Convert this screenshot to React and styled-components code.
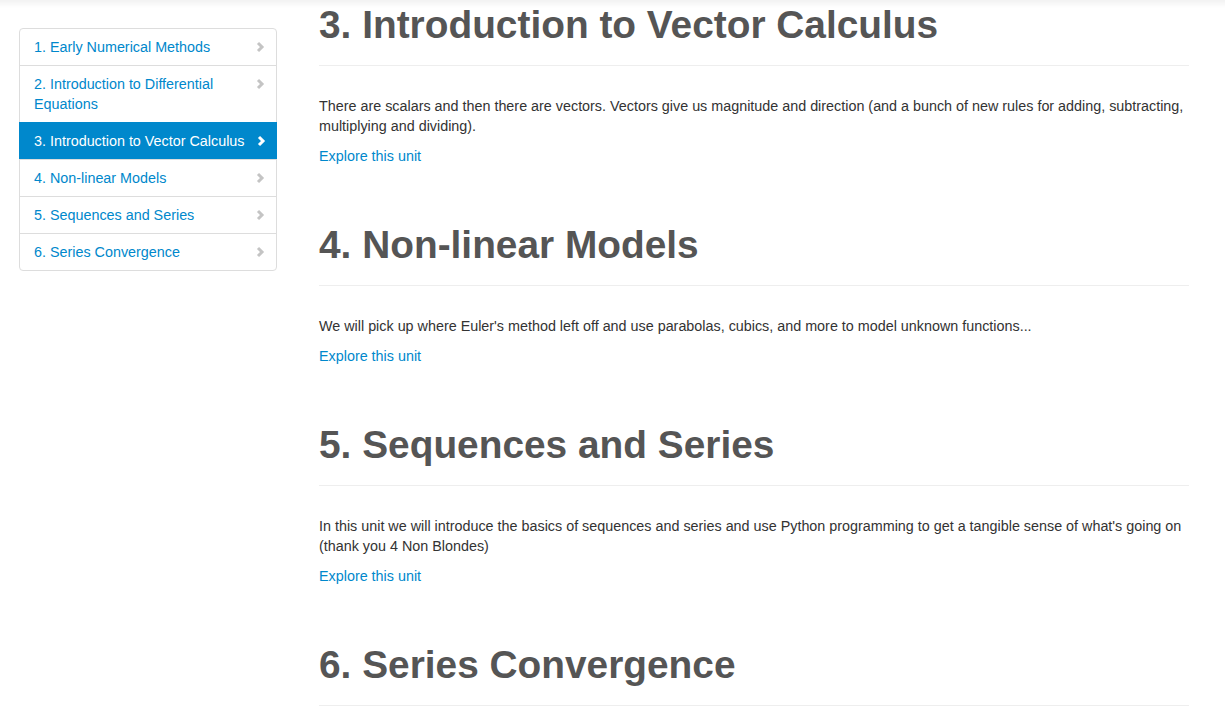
import React from 'react';
import styled, { createGlobalStyle } from 'styled-components';

const GlobalStyle = createGlobalStyle`
  html, body {
    margin: 0;
    padding: 0;
    background: #fff;
  }
  body {
    font-family: 'Liberation Sans', Arial, Helvetica, sans-serif;
    font-size: 14.35px;
    line-height: 20px;
    color: #333;
  }
`;

const TopShade = styled.div`
  position: fixed;
  top: 0;
  left: 0;
  right: 0;
  height: 8px;
  background: linear-gradient(to bottom, rgba(0, 0, 0, 0.05), rgba(0, 0, 0, 0));
  pointer-events: none;
  z-index: 10;
`;

const Page = styled.div`
  display: flex;
  align-items: flex-start;
  gap: 42px;
  padding-left: 19px;
`;

const SideNav = styled.ul`
  width: 258px;
  box-sizing: border-box;
  margin: 28px 0 0;
  padding: 0;
  list-style: none;
  border: 1px solid #ddd;
  border-radius: 4px;
  flex-shrink: 0;
`;

const NavItem = styled.li`
  display: flex;
  align-items: flex-start;
  gap: 7px;
  padding: 8px 11px 8px ${(p) => (p.$active ? '15px' : '14px')};
  margin: 0 ${(p) => (p.$active ? '-1px' : '0')};
  border-top: 1px solid ${(p) => (p.$active ? '#0088cc' : '#ddd')};
  background: ${(p) => (p.$active ? '#0088cc' : 'transparent')};
  color: ${(p) => (p.$active ? '#fff' : '#0088cc')};
  cursor: pointer;

  &:first-child {
    border-top: none;
  }
`;

const NavText = styled.span`
  flex: 1;
`;

const Chevron = styled.svg`
  flex-shrink: 0;
  width: 10px;
  height: 20px;
`;

const Main = styled.main`
  width: 870px;
  padding-top: 3px;
`;

const Section = styled.section`
  & + & {
    margin-top: 57px;
  }
`;

const Header = styled.div`
  padding-bottom: 9px;
  border-bottom: 1px solid #eee;
`;

const Title = styled.h1`
  margin: 0 0 10px;
  font-size: 38.85px;
  line-height: 43px;
  font-weight: bold;
  color: #555;
`;

const Blurb = styled.p`
  margin: 30px 0 10px;
`;

const UnitLink = styled.a`
  display: block;
  color: #0088cc;
  text-decoration: none;
`;

const units = [
  { id: 1, title: 'Early Numerical Methods' },
  { id: 2, title: 'Introduction to Differential Equations' },
  {
    id: 3,
    title: 'Introduction to Vector Calculus',
    text: 'There are scalars and then there are vectors. Vectors give us magnitude and direction (and a bunch of new rules for adding, subtracting, multiplying and dividing).',
  },
  {
    id: 4,
    title: 'Non-linear Models',
    text: "We will pick up where Euler's method left off and use parabolas, cubics, and more to model unknown functions...",
  },
  {
    id: 5,
    title: 'Sequences and Series',
    text: "In this unit we will introduce the basics of sequences and series and use Python programming to get a tangible sense of what's going on (thank you 4 Non Blondes)",
  },
  { id: 6, title: 'Series Convergence' },
];

function ChevronIcon({ active }) {
  return (
    <Chevron viewBox="0 0 10 20">
      <polyline
        points="3,6 7,10 3,14"
        fill="none"
        stroke={active ? '#fff' : '#c4c4c4'}
        strokeWidth="3"
      />
    </Chevron>
  );
}

export default function App() {
  const current = 3;
  return (
    <>
      <GlobalStyle />
      <TopShade />
      <Page>
        <SideNav>
          {units.map((u) => (
            <NavItem key={u.id} $active={u.id === current}>
              <NavText>{`${u.id}. ${u.title}`}</NavText>
              <ChevronIcon active={u.id === current} />
            </NavItem>
          ))}
        </SideNav>
        <Main>
          {units
            .filter((u) => u.id >= 3)
            .map((u) => (
              <Section key={u.id}>
                <Header>
                  <Title>{`${u.id}. ${u.title}`}</Title>
                </Header>
                {u.text && (
                  <>
                    <Blurb>{u.text}</Blurb>
                    <UnitLink href="#">Explore this unit</UnitLink>
                  </>
                )}
              </Section>
            ))}
        </Main>
      </Page>
    </>
  );
}
